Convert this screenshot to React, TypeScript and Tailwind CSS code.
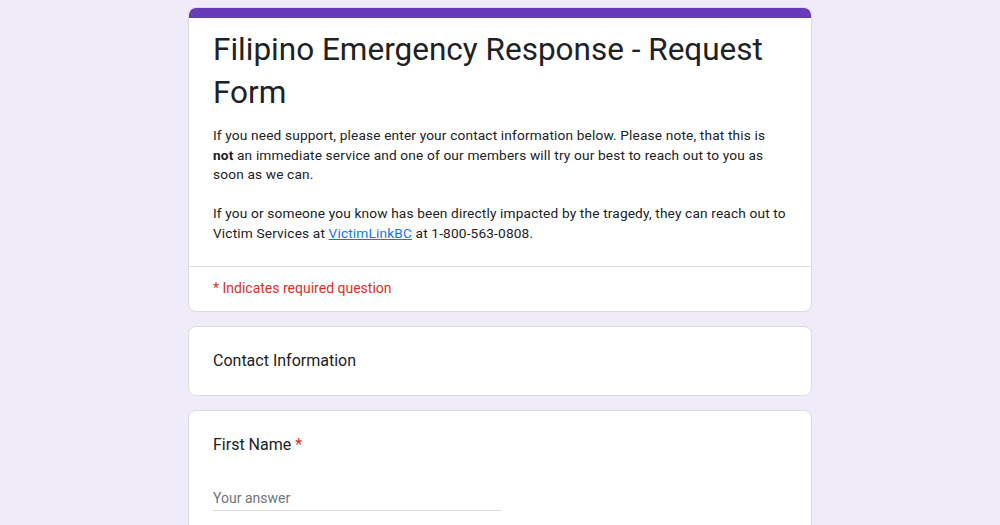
export default function App() {
  return (
    <div className="min-h-[525px] w-full bg-[#f0ebf8] pt-[7px]" style={{ fontFamily: "Roboto, Arial, sans-serif" }}>
      <div className="mx-auto flex w-[624px] flex-col gap-[14px]">
        <div className="overflow-hidden rounded-[8px] border border-[#dadce0] bg-white">
          <div className="h-[10px] bg-[#673ab7]" />
          <div className="px-[24px] pt-[10px] pb-[23px]">
            <h1 className="text-[31.5px] leading-[43px] text-[#202124]" style={{ fontFamily: "Roboto, sans-serif" }}>
              Filipino Emergency Response - Request Form
            </h1>
            <div className="mt-[12px] text-[13.7px] leading-[19.5px] tracking-[0.15px] text-[#202124]">
              <p>
                If you need support, please enter your contact information below. Please note, that this is
                <br />
                <b>not</b> an immediate service and one of our members will try our best to reach out to you as
                <br />
                soon as we can.
              </p>
              <p className="mt-[19.5px]">
                If you or someone you know has been directly impacted by the tragedy, they can reach out to
                <br />
                Victim Services at{" "}
                <a className="text-[#1a73e8] underline" href="#">
                  VictimLinkBC
                </a>{" "}
                at 1-800-563-0808.
              </p>
            </div>
          </div>
          <div className="border-t border-[#dadce0] px-[24px] pt-[11px] pb-[13px] text-[14px] leading-[20px] text-[#d93025]">
            * Indicates required question
          </div>
        </div>
        <div className="rounded-[8px] border border-[#dadce0] bg-white px-[24px] py-[24px]">
          <div className="text-[16px] leading-[20px] text-[#202124]">Contact Information</div>
        </div>
        <div className="rounded-[8px] border border-[#dadce0] bg-white px-[24px] pt-[22px] pb-[24px]">
          <div className="text-[16px] leading-[24px] text-[#202124]">
            First Name <span className="text-[#d93025]">*</span>
          </div>
          <div className="mt-[31px] w-[288px] border-b border-[#dadce0] pb-[2px] text-[14px] leading-[20px] text-[#70757a]">
            Your answer
          </div>
        </div>
      </div>
    </div>
  );
}
